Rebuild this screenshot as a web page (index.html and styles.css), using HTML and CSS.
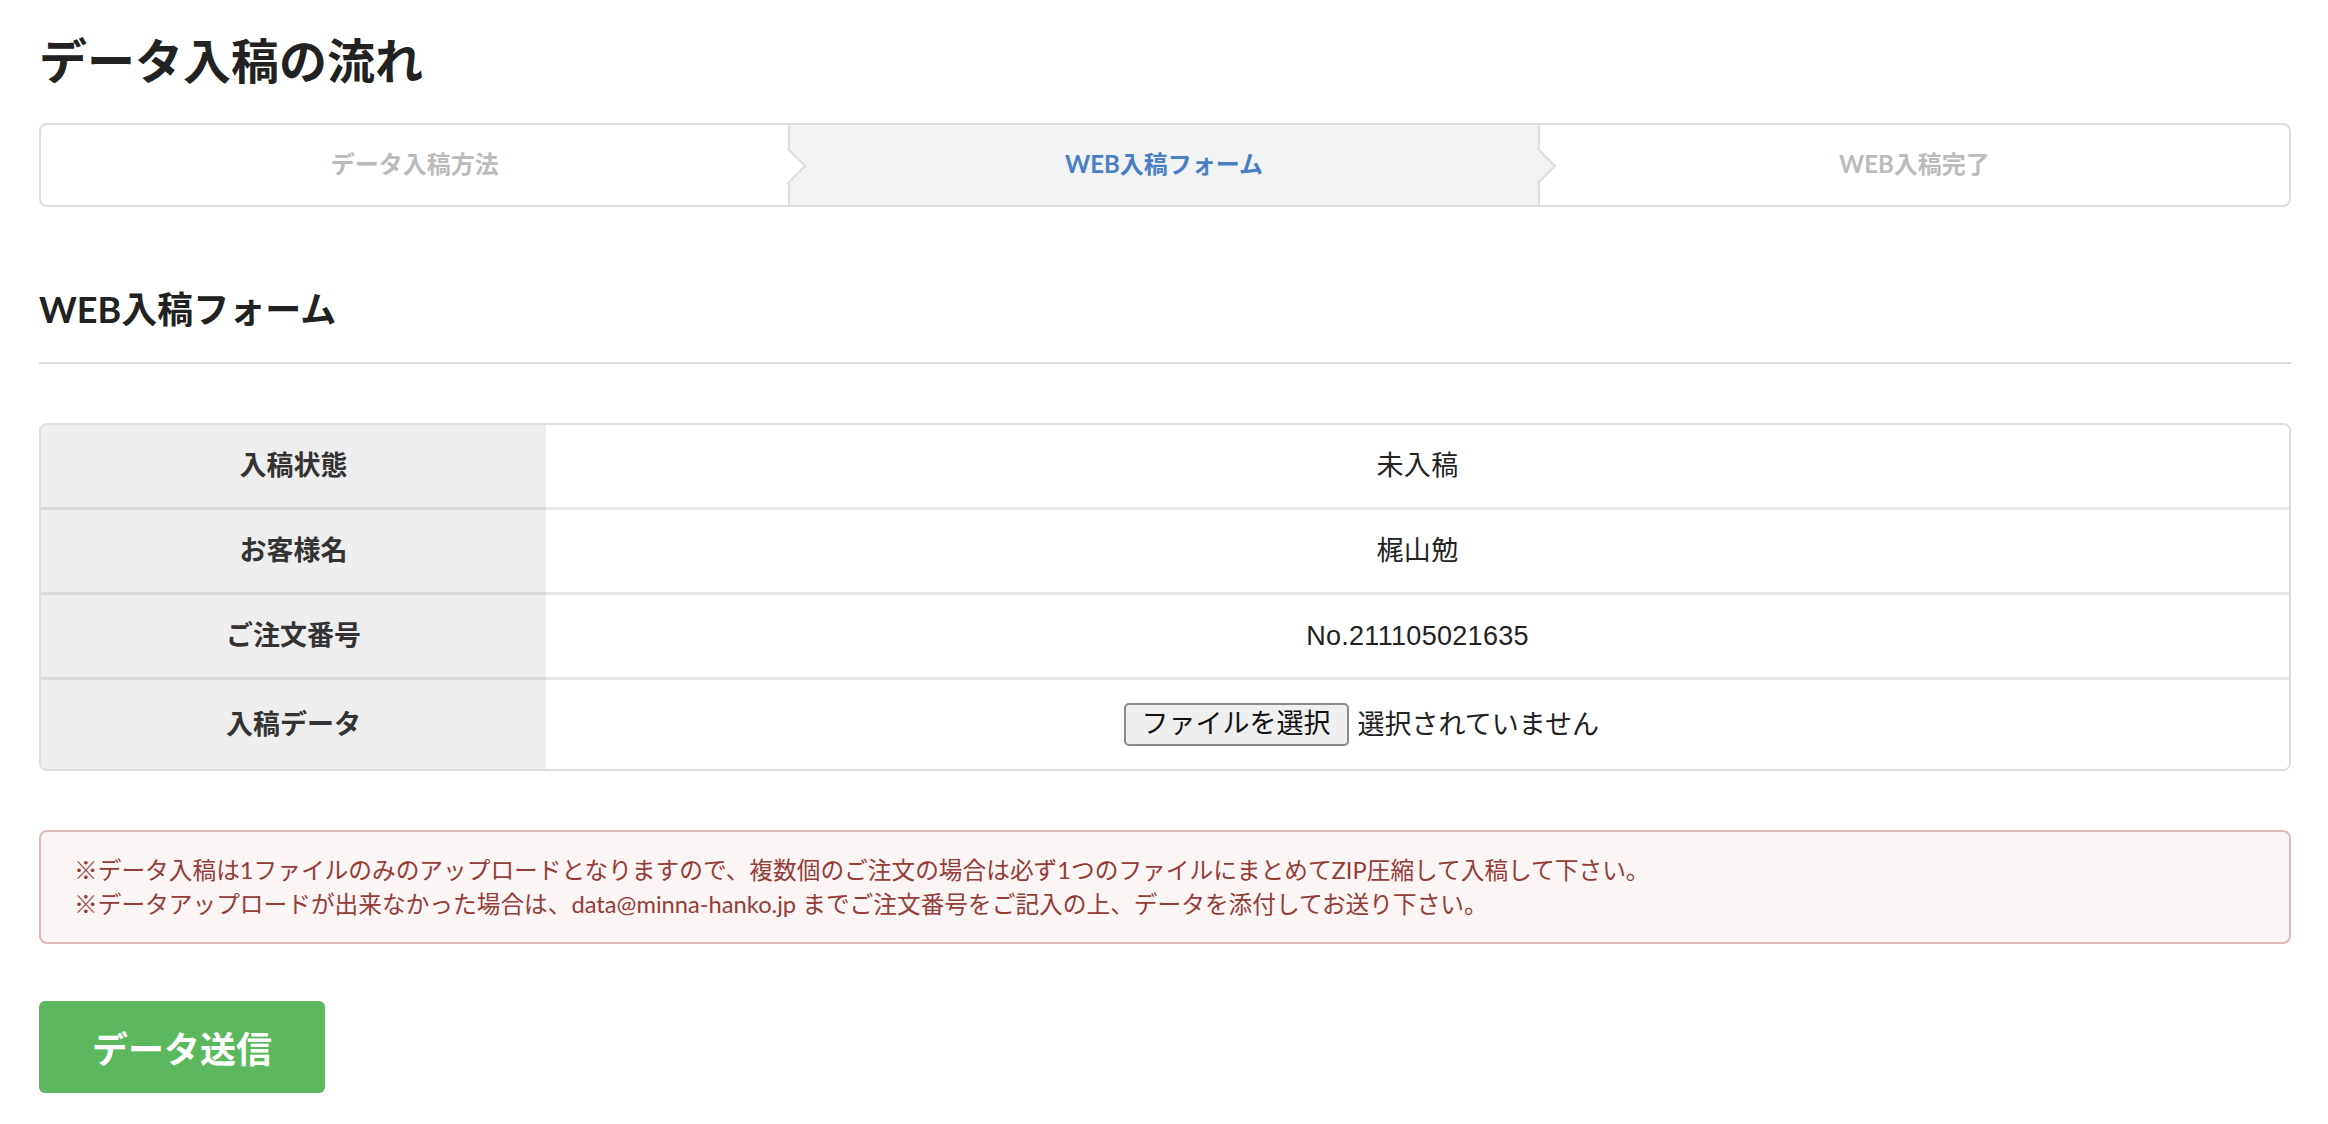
FILE: index.html
```html
<!DOCTYPE html>
<html lang="ja">
<head>
    <meta charset="UTF-8">
    <meta name="viewport" content="width=device-width, initial-scale=1.0">
    <title>データ入稿の流れ</title>
    <link rel="stylesheet" href="styles.css">
</head>
<body>
    <div class="page">
        <h1 class="page-title">データ入稿の流れ</h1>

        <ol class="steps">
            <li class="step">データ入稿方法</li>
            <li class="step active">WEB入稿フォーム</li>
            <li class="step">WEB入稿完了</li>
        </ol>

        <h2 class="section-title">WEB入稿フォーム</h2>

        <table class="form-table">
            <tr>
                <th>入稿状態</th>
                <td>未入稿</td>
            </tr>
            <tr>
                <th>お客様名</th>
                <td>梶山勉</td>
            </tr>
            <tr>
                <th>ご注文番号</th>
                <td>No.211105021635</td>
            </tr>
            <tr>
                <th>入稿データ</th>
                <td>
                    <label class="file-field">
                        <span class="file-btn">ファイルを選択</span>
                        <span class="file-name">選択されていません</span>
                    </label>
                </td>
            </tr>
        </table>

        <div class="alert">
            <p>※データ入稿は1ファイルのみのアップロードとなりますので、複数個のご注文の場合は必ず1つのファイルにまとめてZIP圧縮して入稿して下さい。</p>
            <p>※データアップロードが出来なかった場合は、data@minna-hanko.jp までご注文番号をご記入の上、データを添付してお送り下さい。</p>
        </div>

        <button class="submit-btn" type="button">データ送信</button>
    </div>
</body>
</html>
```

FILE: styles.css
```css
* {
    margin: 0;
    padding: 0;
    box-sizing: border-box;
}

html, body {
    background: #fff;
    font-family: Lato, "Noto Sans CJK JP", sans-serif;
    color: #222;
}

.page {
    padding: 31px 37px 0 39px;
}

.page-title {
    font-size: 48px;
    line-height: 60px;
    font-weight: bold;
    color: #222;
}

/* ステップ表示 */
.steps {
    list-style: none;
    margin-top: 32px;
    display: grid;
    grid-template-columns: 1fr 1fr 1fr;
    height: 84px;
    border: 2px solid #ddd;
    border-radius: 8px;
}

.step {
    position: relative;
    display: flex;
    justify-content: center;
    align-items: center;
    padding-bottom: 5px;
    font-size: 24px;
    font-weight: bold;
    color: #bbb;
    background: #fff;
    border-right: 2px solid #ddd;
    border-radius: 8px 0 0 8px;
}

.step:last-child {
    border-right: none;
    border-radius: 0 8px 8px 0;
}

.step.active {
    background: #f2f3f5;
    color: #4a7fc1;
    border-radius: 0;
}

.step:not(:last-child)::after {
    content: "";
    position: absolute;
    top: 50%;
    right: -13px;
    width: 24px;
    height: 24px;
    margin-top: -12px;
    background: inherit;
    border-top: 2px solid #ddd;
    border-right: 2px solid #ddd;
    border-radius: 0;
    transform: rotate(45deg);
    z-index: 1;
}

.section-title {
    margin-top: 80px;
    padding-bottom: 31px;
    border-bottom: 2px solid #ddd;
    font-size: 36px;
    line-height: 44px;
    font-weight: bold;
    color: #222;
}

/* フォーム */
.form-table {
    margin-top: 59px;
    width: 100%;
    border: 2px solid #ddd;
    border-radius: 8px;
    border-spacing: 0;
    overflow: hidden;
}

.form-table th,
.form-table td {
    padding: 23px 10px;
    line-height: 36px;
    font-size: 27px;
    text-align: center;
    vertical-align: middle;
    font-family: "Liberation Sans", "Noto Sans CJK JP", sans-serif;
}

.form-table th {
    width: 505px;
    background: #eee;
    color: #333;
    font-weight: bold;
}

.form-table td {
    background: #fff;
    color: #222;
    font-weight: normal;
    letter-spacing: 0.3px;
}

.form-table tr + tr th {
    border-top: 3px solid #d9d9d9;
}

.form-table tr + tr td {
    border-top: 3px solid #e6e8e8;
}

.file-field {
    display: inline-flex;
    align-items: center;
    width: 588px;
    text-align: left;
    letter-spacing: 0;
}

.file-btn {
    display: inline-block;
    height: 43px;
    padding: 0 16px;
    line-height: 39px;
    border: 2px solid #8a8a8a;
    border-radius: 5px;
    background: #efefef;
    color: #111;
}

.file-name {
    margin-left: 9px;
}

/* 注意書き */
.alert {
    margin-top: 59px;
    padding: 21px 33px;
    background: #fbf5f5;
    border: 2px solid #e0b9b9;
    border-radius: 8px;
    color: #943c36;
    font-size: 23.7px;
    line-height: 34px;
}

.submit-btn {
    display: block;
    margin-top: 57px;
    width: 286px;
    height: 92px;
    border: none;
    border-radius: 6px;
    background: #5cb85c;
    color: #fff;
    font-family: Lato, "Noto Sans CJK JP", sans-serif;
    font-size: 36px;
    font-weight: bold;
    cursor: pointer;
}
```
